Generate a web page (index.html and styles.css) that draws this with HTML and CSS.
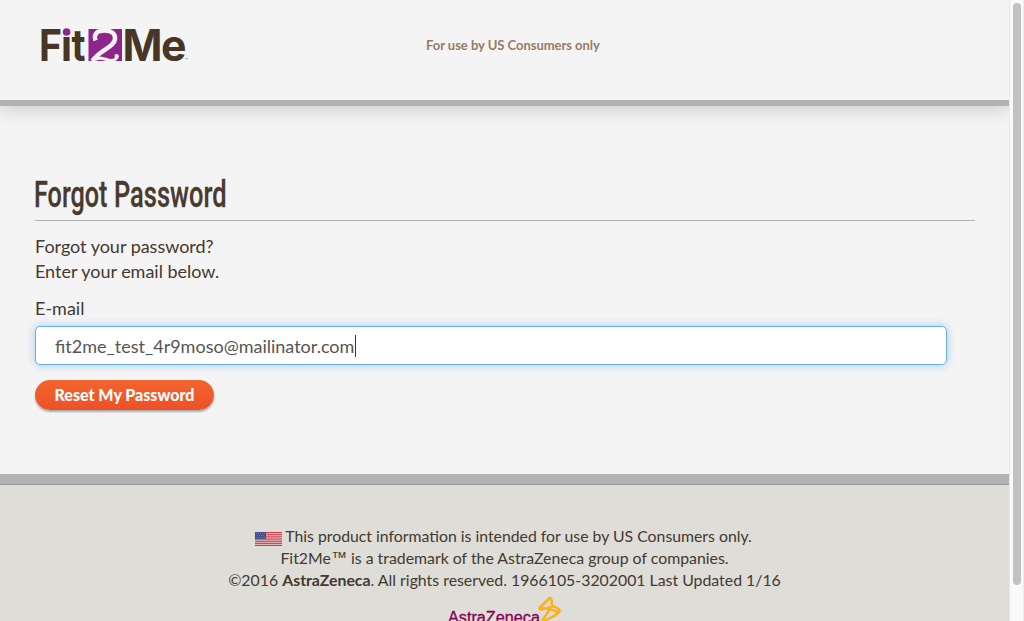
FILE: index.html
```html
<!DOCTYPE html>
<html lang="en">
<head>
<meta charset="utf-8">
<title>Fit2Me - Forgot Password</title>
<link rel="stylesheet" href="styles.css">
</head>
<body>
<div class="window">
  <div class="page">
    <header class="header">
      <svg class="logo" width="150" height="40" viewBox="40 25 150 40" role="img" aria-label="Fit2Me">
        <g class="logo-word">
          <text x="39" y="61" textLength="23" lengthAdjust="spacingAndGlyphs">F</text>
          <text x="61" y="61" textLength="11" lengthAdjust="spacingAndGlyphs">i</text>
          <text x="71.500" y="61" textLength="14" lengthAdjust="spacingAndGlyphs">t</text>
          <text x="122.500" y="61" textLength="40" lengthAdjust="spacingAndGlyphs">M</text>
          <text x="161" y="61" textLength="25.500" lengthAdjust="spacingAndGlyphs">e</text>
        </g>
        <rect class="logo-dot" x="61" y="26" width="11" height="11"/>
        <circle class="logo-purple" cx="66.600" cy="32" r="3.800"/>
        <rect class="logo-purple" x="88.500" y="29" width="33.500" height="32"/>
        <path class="logo-two" d="M95.500 40.500C93.500 34 97 30.500 104.500 30.500C112 30.500 115.500 34 115 39C114.500 45 107 48 101 52.500C97 55.500 94 58 92.500 61"/>
        <path class="logo-tail" d="M95 60C100 55 106 60.500 111 60.500C115 60.500 117.500 58 117.500 55.500"/>
        <circle class="logo-dot" cx="116.500" cy="56" r="2"/>
        <text class="logo-tm" x="185" y="61">™</text>
      </svg>
      <p class="audience">For use by US Consumers only</p>
    </header>
    <main class="content">
      <h1 class="title"><svg width="200" height="44" viewBox="0 0 200 44"><text x="-1" y="32" textLength="73.500" lengthAdjust="spacingAndGlyphs">Forgot</text><text x="79" y="32" textLength="112.500" lengthAdjust="spacingAndGlyphs">Password</text></svg></h1>
      <p class="intro">Forgot your password?<br>Enter your email below.</p>
      <form class="form">
        <label class="label" for="email">E-mail</label>
        <div class="field" id="email"><span>fit2me_test_4r9moso@mailinator.com</span><i class="caret"></i></div>
        <button class="button" type="button">Reset My Password</button>
      </form>
    </main>
    <footer class="footer">
      <p class="line line-one"><svg class="flag" width="27" height="14" viewBox="0 0 27 14"><path fill="#e5b8b8" d="M0 0h27v14H0z"/><path stroke="#cc394a" d="M0 .5h27M0 2.700h27M0 4.900h27M0 7.100h27M0 9.300h27M0 11.400h27M0 13.500h27"/><path fill="#42528b" d="M0 0h11v7H0z"/><path stroke="#8994b6" stroke-width=".6" stroke-dasharray="1 1" d="M1 1.500h9M2 3.500h8M1 5.500h9"/></svg><span>This product information is intended for use by US Consumers only.</span></p>
      <p class="line">Fit2Me<span class="tm">™</span> is a trademark of the AstraZeneca group of companies.</p>
      <p class="line">©2016 <b>AstraZeneca</b>. All rights reserved. 1966105-3202001 Last Updated 1/16</p>
      <svg class="company" width="116" height="32" viewBox="447 595 116 32" role="img" aria-label="AstraZeneca">
        <text x="448" y="624" textLength="92" lengthAdjust="spacingAndGlyphs">AstraZeneca</text>
        <path d="M550 598.500L540 608.500Q538.500 611 541 610.500L553 607.500M550 598.500L551.500 601L552 607L542 622M540 609Q548 609 558 613M552 607Q560 609 559.500 612.500Q558 615 550 619L543 623"/>
      </svg>
    </footer>
  </div>
  <div class="scrollbar"><div class="thumb"></div></div>
</div>
</body>
</html>
```
FILE: styles.css
```css
* { box-sizing: border-box; }
body { margin: 0; overflow: hidden; background: #f4f4f4; color: #43392f; font-family: Lato, sans-serif; }
.window { display: grid; grid-template-columns: 1009px 15px; height: 621px; overflow: hidden; }
.page { height: 621px; overflow: hidden; display: flex; flex-direction: column; }
.header { flex: none; height: 106px; display: flex; align-items: flex-start; padding: 25px 0 0 40px; border-bottom: 6px solid #b2b2b2; box-shadow: 0 2px 18px rgba(0, 0, 0, .2); }
.logo { flex: none; overflow: visible; }
.logo-word { font: 700 44px Inter, sans-serif; fill: #483526; }
.logo-purple { fill: #8d258d; }
.logo-two { fill: none; stroke: #f4f4f4; stroke-width: 4.500; }
.logo-tail { fill: none; stroke: #f4f4f4; stroke-width: 3; }
.logo-dot { fill: #f4f4f4; }
.logo-tm { font-size: 4px; fill: #665b50; }
.audience { margin: 12px 0 0 236px; font-size: 13px; line-height: 16px; font-weight: 700; color: #987b64; letter-spacing: -.03px; white-space: nowrap; }
.content { flex: none; height: 368px; padding: 69px 34px 0 35px; }
.title { height: 46px; margin: 0; border-bottom: 1px solid #b2b2b2; }
.title svg { display: block; overflow: visible; }
.title text { font: 500 36.500px Roboto, sans-serif; fill: #483a2e; stroke: #483a2e; stroke-width: .3px; }
.intro { margin: 13px 0 0; font-size: 18px; line-height: 25px; letter-spacing: -.02px; }
.form { display: flex; flex-direction: column; align-items: flex-start; }
.label { margin-top: 12px; font-size: 18px; line-height: 25px; }
.field { width: 912px; height: 39px; margin-top: 5px; padding: 2px 19px 0; display: flex; align-items: center; border: 1px solid #66afe9; border-radius: 5px; background: #fff; box-shadow: 0 0 8px rgba(102, 175, 233, .6); font-size: 18px; line-height: 25px; color: #555; }
.caret { width: 1px; height: 22px; margin: -2px 0 0 1px; background: #333; }
.button { height: 30px; width: 179px; margin-top: 15px; padding: 0 0 2px; border: 0; border-radius: 15px; background: linear-gradient(#f2652e, #ee5027); box-shadow: 0 2px 2px rgba(0, 0, 0, .3); color: #fff; font: 900 16px Lato, sans-serif; }
.footer { flex: none; height: 160px; padding-top: 41px; border-top: 10px solid #b2b2b2; background: #deddd8; box-shadow: inset 0 1px #999892; display: flex; flex-direction: column; align-items: center; font-size: 15.850px; }
.line { display: flex; margin: 0; height: 22px; line-height: 22px; white-space: pre; }
.line-one { font-size: 15.800px; margin-left: -2px; }
.flag { margin: 7px 3px 0 0; }
.tm { font: 16px/22px "Liberation Sans", Arial, sans-serif; }
.company { margin-top: 3px; overflow: visible; }
.company text { font: 400 16px "Liberation Sans", Arial, sans-serif; fill: #870051; stroke: #870051; stroke-width: .3px; }
.company path { fill: none; stroke: #fdb11b; stroke-width: 2.500; stroke-linejoin: round; }
.scrollbar { padding: 0 2px 0 3px; border-left: 1px solid #e7e7e7; border-right: 1px solid #ededed; background: #fafafa; }
.thumb { width: 8px; height: 582px; margin-top: 3px; border-radius: 4px; background: #c1c1c1; }
```
